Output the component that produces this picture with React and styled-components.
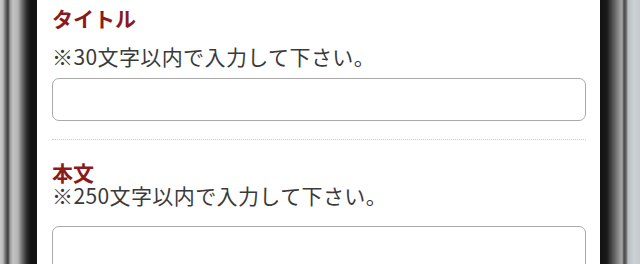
import styled, { createGlobalStyle } from "styled-components";

const GlobalStyle = createGlobalStyle`
  html, body {
    margin: 0;
    padding: 0;
    background: #000;
  }
  body {
    font-family: "Noto Sans CJK JP", "Noto Sans", sans-serif;
  }
`;

const Phone = styled.div`
  display: flex;
  width: 640px;
  height: 264px;
  overflow: hidden;
`;

const LeftBezel = styled.div`
  width: 37px;
  flex-shrink: 0;
  background: linear-gradient(
    to right,
    #cbcbcb 0px,
    #b8b8b8 3px,
    #7a7a7a 5px,
    #3a3a3a 8px,
    #9a9a9a 10px,
    #c4c4c4 13px,
    #b3b3b3 18px,
    #6e6e6e 22px,
    #2a2a2a 27px,
    #111 31px,
    #151515 37px
  );
`;

const RightBezel = styled.div`
  width: 40px;
  flex-shrink: 0;
  background: linear-gradient(
    to right,
    #121212 0px,
    #1a1a1a 7px,
    #555 13px,
    #8e8e8e 19px,
    #a9a9a9 22px,
    #4a4a4a 24px,
    #606060 26px,
    #b9bec1 28px,
    #ccd1d4 34px,
    #c6cacd 40px
  );
`;

const Screen = styled.div`
  flex: 1;
  background: #fff;
  padding: 0 14px 0 15px;
`;

const Section = styled.section`
  padding-top: ${(p) => p.$top}px;
  padding-bottom: 18px;
  border-bottom: ${(p) => (p.$divider ? "1px dotted #c8c8c8" : "none")};
`;

const Label = styled.h3`
  margin: 0;
  font-size: 21px;
  line-height: 23px;
  font-weight: 700;
  color: #8a1a1c;
`;

const Note = styled.p`
  margin: ${(p) => p.$gap}px 0 0;
  font-size: 21px;
  line-height: 23px;
  font-weight: 400;
  letter-spacing: 0.4px;
  color: #3a3a3a;
`;

const Field = styled.input`
  display: block;
  box-sizing: border-box;
  width: 100%;
  height: ${(p) => p.$height}px;
  margin-top: ${(p) => p.$gap}px;
  border: 1.5px solid #a9a9a9;
  border-radius: 7px;
  background: #fff;
  outline: none;
  font: inherit;
  padding: 0 10px;
`;

export default function App() {
  return (
    <>
      <GlobalStyle />
      <Phone>
        <LeftBezel />
        <Screen>
          <Section $top={7} $divider>
            <Label>タイトル</Label>
            <Note $gap={15}>※30文字以内で入力して下さい。</Note>
            <Field $gap={10} $height={43} />
          </Section>
          <Section $top={21}>
            <Label>本文</Label>
            <Note $gap={0}>※250文字以内で入力して下さい。</Note>
            <Field as="textarea" $gap={19} $height={120} />
          </Section>
        </Screen>
        <RightBezel />
      </Phone>
    </>
  );
}
